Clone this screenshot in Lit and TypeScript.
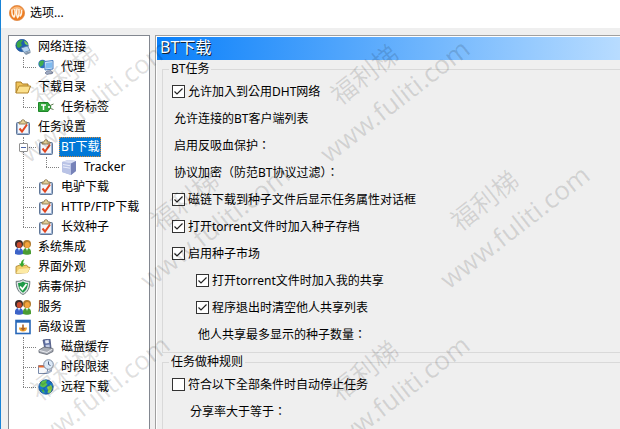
import { LitElement, html, css, svg, nothing } from "lit";
import type { SVGTemplateResult, TemplateResult } from "lit";
import { customElement, property } from "lit/decorators.js";

const person = (x: number, hair: string, face: string, coat: string) => svg`
  <g transform="translate(${x} 0)">
    <path d="M0 15c-.6-4 1-6 4-6s4.500 2 4 6c-2 1-6 1-8 0z" fill="${coat}"/>
    <path d="M3 9l1 3 1-3z" fill="#fff"/>
    <circle cx="4" cy="5" r="4" fill="${hair}"/>
    <ellipse cx="4.300" cy="6" rx="2.500" ry="3" fill="${face}"/>
  </g>`;

const people = svg`${person(0, "#3a2a28", "#c84a2c", "#3c63c8")}${person(8, "#b07a2c", "#f4a43c", "#4a9c34")}`;

const clipboard = svg`
  <rect x="1.500" y="3.500" width="13" height="12" rx="1" fill="#9fb4d4" stroke="#5f7697"/>
  <rect x="3" y="4" width="10" height="10" fill="#f4f6fb"/>
  <path d="M4 5V3h2c0-3 4-3 4 0h2v2z" fill="#e4cf98" stroke="#7d6a42" stroke-width=".8"/>
  <path d="M4.500 9.500l2.500 3 5-7" fill="none" stroke="#e2461f" stroke-width="2"/>`;

const icons: Record<string, SVGTemplateResult> = {
  logo: svg`
    <circle cx="8" cy="8" r="7.600" fill="#ee7d22" stroke="#e08a48" stroke-width=".8"/>
    <path d="M1.500 6C4 0 12 0 14.500 6c-3-2-10-2-13 0z" fill="#f9b87a"/>
    <path d="M3 4.500c-.4 4 .4 6.500 2 7.500 1.200-1.500 1.200-5 .8-8M8 3.500c-.6 4-.3 7.500.6 9 1.500-1.800 1.700-5 1.300-8.500M12.500 5c.4 3-.1 5-1.700 6.500" fill="none" stroke="#fff4e4" stroke-width="1.500"/>`,
  network: svg`
    <circle cx="7" cy="6.500" r="6.200" fill="#1f5fae" stroke="#174a8c" stroke-width=".6"/>
    <path d="M1.500 5c1-3 4-4.500 6.500-4l-2 3 1 2.500-3 2.500-2-1z" fill="#3aa646"/>
    <path d="M9 1.500c2.500 1 4 3 4 5l-3-1.500z" fill="#7fd455"/>
    <path d="M6 9l6.500-2 2.500 4.500-6 2z" fill="#b6d5f2" stroke="#54789f" stroke-width=".8"/>
    <path d="M9 14l6.500-2v2l-4.500 2z" fill="#8496ab"/>`,
  proxy: svg`
    <circle cx="4.500" cy="5" r="4.200" fill="#2f72bd"/>
    <path d="M1 4c1-3 4-3 5-2L5 6 2 8z" fill="#3fae4d"/>
    <path d="M6.500 2.500l8.500-1v8.500l-8 1z" fill="#cfe4fa" stroke="#4a7fc0"/>
    <path d="M8 4l6-.8v5.500L8 9.500z" fill="#7fbcf0"/>
    <path d="M9 12l4-.5 2 2.500-6 1.500-2-1.500z" fill="#9fabc2" stroke="#66718c" stroke-width=".7"/>`,
  folder: svg`
    <path d="M1 14V3h5l1.500 2H13v3" fill="#f0c45a" stroke="#a87a24"/>
    <path d="M1 14L4 7h11.500L13 14z" fill="#fbe08c" stroke="#b3852b"/>`,
  tag: svg`
    <path d="M.5 3.500h9.500L13 8l-3 4.500H.5z" fill="#33a83b" stroke="#1f8629"/>
    <path d="M3 6h5M5.500 6v5" stroke="#fff" stroke-width="1.500"/>
    <path d="M11 7l4.500-2M11 9l4.500 1.500" stroke="#5b7a4e"/>
    <circle cx="11" cy="8" r="1.100" fill="#fff"/>`,
  clipboard,
  server: svg`
    <path d="M1 3l6-2 8 1v10l-5 4-9-3z" fill="#a9b4dc"/>
    <path d="M1 3l6-2 8 1-5 2.500z" fill="#d7ddf3"/>
    <path d="M10 4.500L15 2v10l-5 4z" fill="#7682b8"/>
    <path d="M1 3l9 1.500V16l-9-3z" fill="#b9c3e6"/>
    <path d="M2 5.500l7 1.200M2 8l7 1.200" stroke="#e9edfa"/>`,
  people,
  look: svg`
    <path d="M1 14.500V7.500l4-1.500 2 1 4.500-1 1.500 2 2 .5-2.500 5z" fill="#f2cf6c" stroke="#b08a35" stroke-width=".9"/>
    <path d="M1 14.500l3-4.500 11-1-2.500 5z" fill="#fdeaa4"/>
    <path d="M9.500 0C6.500 1 6 3 6 4.500H4l3 3.500 2.800-3.500H8.200c0-1.500.3-3 1.300-4.500z" fill="#35a82e"/>`,
  shield: svg`
    <path d="M8 .6c2 1.400 4.500 1.900 6.800 1.700C15 9 12.500 13.500 8 15.500 3.500 13.500 1 9 1.200 2.300 3.500 2.500 6 2 8 .6z" fill="#dfe5e6" stroke="#59696b" stroke-width=".9"/>
    <path d="M8 2.500c1.500 1 3.300 1.500 5 1.500-.2 4.500-2 8-5 9.700C5 12 3.200 8.500 3 4c1.700 0 3.500-.5 5-1.500z" fill="#1f9a48"/>
    <path d="M5 7.500l2.500 2.800L11.500 5" fill="none" stroke="#fff" stroke-width="1.800"/>`,
  advanced: svg`
    <rect x="1" y="1.500" width="14" height="13" fill="#fff" stroke="#2767b8" stroke-width="1.600"/>
    <path d="M1 2.500h14" stroke="#2767b8" stroke-width="2.400"/>
    <path d="M4 8.500a4 4 0 0 0 8 0z" fill="#f1a22a"/>
    <path d="M7.200 5.500h1.600V9h1.700L8 12 5.500 9h1.700z" fill="#a8622c"/>`,
  disk: svg`
    <path d="M5 1l7-1 1 9-6 1z" fill="#5f70a4" stroke="#444f78" stroke-width=".8"/>
    <path d="M7 1.500l3.500-.5.5 3-3.500.5z" fill="#e7ecf7"/>
    <path d="M7.500 6l4-.5.300 3-3.800.5z" fill="#c2cbe4"/>
    <path d="M1 11l5-3 9 1.500v3l-6 3-8-2z" fill="#a9adb6" stroke="#5d626d" stroke-width=".8"/>
    <path d="M1.500 11.500l7.500 2 5.500-3.500" fill="none" stroke="#e9ebef"/>`,
  schedule: svg`
    <path d="M.5 6.500h9v8h-9z" fill="#f5f7fb" stroke="#7a8bab"/>
    <path d="M.5 6.500h9v2h-9z" fill="#e8682e"/>
    <circle cx="10.500" cy="5.500" r="4.800" fill="#dbe8f6" stroke="#7b8ba3"/>
    <path d="M10.500 2.500v3l2 1" fill="none" stroke="#4c5f80"/>
    <path d="M8 13l6-3v2.500L10 15z" fill="#a7b4cb"/>`,
  globe: svg`
    <circle cx="8" cy="8" r="7.200" fill="#1a78cc" stroke="#114f8f" stroke-width=".8"/>
    <path d="M3 3c2-2 5-2 6-1.500L8 4l1.500 1.500L7 8l-2 .5L2 7z" fill="#5cc14c"/>
    <path d="M9 8l4-2 1.500 3-2 4.500L9.500 14 10 11z" fill="#8cd04a"/>
    <path d="M3 10l3 1 .5 3-2-1z" fill="#46b350"/>`,
};

const icon = (name: string): TemplateResult =>
  html`<svg class="icon" viewBox="0 0 16 16" width="16" height="16" aria-hidden="true">${icons[name]}</svg>`;

interface Node {
  label: string;
  icon: string;
  selected?: boolean;
  expander?: boolean;
  children?: Node[];
}

const TREE: Node[] = [
  { label: "网络连接", icon: "network", children: [{ label: "代理", icon: "proxy" }] },
  { label: "下载目录", icon: "folder", children: [{ label: "任务标签", icon: "tag" }] },
  {
    label: "任务设置",
    icon: "clipboard",
    children: [
      {
        label: "BT下载",
        icon: "clipboard",
        selected: true,
        expander: true,
        children: [{ label: "Tracker", icon: "server" }],
      },
      { label: "电驴下载", icon: "clipboard" },
      { label: "HTTP/FTP下载", icon: "clipboard" },
      { label: "长效种子", icon: "clipboard" },
    ],
  },
  { label: "系统集成", icon: "people" },
  { label: "界面外观", icon: "look" },
  { label: "病毒保护", icon: "shield" },
  { label: "服务", icon: "people" },
  {
    label: "高级设置",
    icon: "advanced",
    children: [
      { label: "磁盘缓存", icon: "disk" },
      { label: "时段限速", icon: "schedule" },
      { label: "远程下载", icon: "globe" },
    ],
  },
];

@customElement("option-tree")
export class OptionTree extends LitElement {
  static styles = css`
    :host {
      display: block;
      background: #fff;
      border: 1px solid #828790;
      border-bottom: 0;
      box-sizing: border-box;
      padding: 1px 0 0 6px;
    }
    ul {
      list-style: none;
      margin: 0;
      padding: 0;
    }
    .branch {
      margin-left: 8px;
    }
    .branch > li {
      position: relative;
      padding-left: 15px;
    }
    .branch > li::before {
      content: "";
      position: absolute;
      left: 0;
      top: 0;
      bottom: 0;
      border-left: 1px dotted #808080;
    }
    .branch > li:last-child::before {
      bottom: auto;
      height: 10px;
    }
    .branch > li::after {
      content: "";
      position: absolute;
      left: 0;
      top: 10px;
      width: 13px;
      border-top: 1px dotted #808080;
    }
    .row {
      display: flex;
      align-items: center;
      height: 20px;
      gap: 5px;
    }
    .icon {
      flex: none;
      display: block;
    }
    .label {
      line-height: 18px;
      padding: 0 1px;
      border: 1px solid transparent;
      white-space: nowrap;
    }
    .selected {
      background: #0078d7;
      color: #fff;
      border: 1px dotted #d88a3a;
    }
    .expander {
      position: absolute;
      z-index: 1;
      left: -4px;
      top: 6px;
      width: 9px;
      height: 9px;
      padding: 0;
      border: 1px solid #919191;
      border-radius: 1px;
      background: linear-gradient(#4b63a7, #4b63a7) center / 5px 1px no-repeat #fff;
    }
  `;

  private node(n: Node): TemplateResult {
    return html`<li role="treeitem" aria-selected=${n.selected ? "true" : "false"}>
      ${n.expander ? html`<button class="expander" aria-label="折叠"></button>` : nothing}
      <div class="row">${icon(n.icon)}<span class="label ${n.selected ? "selected" : ""}">${n.label}</span></div>
      ${n.children
        ? html`<ul class="branch" role="group">${n.children.map((c) => this.node(c))}</ul>`
        : nothing}
    </li>`;
  }

  render() {
    return html`<ul role="tree">${TREE.map((n) => this.node(n))}</ul>`;
  }
}

@customElement("check-row")
export class CheckRow extends LitElement {
  @property() label = "";
  @property({ type: Boolean }) checked = false;

  static styles = css`
    :host {
      display: block;
    }
    label {
      display: flex;
      align-items: center;
      gap: 3px;
      height: 27px;
      white-space: nowrap;
    }
    input {
      appearance: none;
      flex: none;
      width: 13px;
      height: 13px;
      margin: 0;
      border: 1px solid #333;
      background: #fff;
    }
    input:checked {
      background: #fff
        url("data:image/svg+xml,%3Csvg xmlns='http://www.w3.org/2000/svg' viewBox='0 0 11 11'%3E%3Cpath d='M1.500 5.500L4 8l5.500-5.500' fill='none' stroke='%23222' stroke-width='1.200'/%3E%3C/svg%3E")
        center / 11px 11px no-repeat;
    }
  `;

  render() {
    return html`<label><input type="checkbox" .checked=${this.checked} />${this.label}</label>`;
  }
}

const MARKS = [
  [28, 164],
  [328, 164],
  [628, 164],
  [148, 290],
  [448, 290],
  [28, 460],
  [328, 460],
];

@customElement("app-root")
export class AppRoot extends LitElement {
  static styles = css`
    :host {
      display: flex;
      flex-direction: column;
      position: relative;
      box-sizing: border-box;
      height: 100vh;
      overflow: hidden;
      border-left: 1px solid #1883d7;
      background: #efefef;
      color: #000;
      font: 12px/20px "Noto Sans", "Noto Sans CJK TC", sans-serif;
    }
    .titlebar {
      flex: none;
      display: flex;
      align-items: center;
      gap: 5px;
      height: 25px;
      padding: 0 8px 3px;
      background: #fff;
    }
    .body {
      flex: 1;
      min-height: 0;
      display: flex;
      gap: 5px;
      padding: 7px 0 0 7px;
    }
    option-tree {
      flex: none;
      width: 142px;
    }
    .panel {
      flex: 1;
      min-width: 0;
      display: flex;
      flex-direction: column;
      border: solid #a0a0a0;
      border-width: 1px 0 0 1px;
      box-shadow: inset 1px 1px #fff;
      padding: 1px 0 0 1px;
    }
    .banner {
      margin: 0;
      padding-left: 3px;
      height: 23px;
      font-size: 16px;
      font-weight: 400;
      line-height: 20px;
      color: #fff;
      text-shadow: 1px 1px #123;
      background: linear-gradient(90deg, #0a80fa, #b8dcff);
    }
    fieldset {
      flex: none;
      margin: 0 0 0 5px;
      min-width: 0;
      border: 1px solid #d9d9d9;
      border-right: 0;
      padding: 0 0 4px 9px;
    }
    fieldset.rules {
      flex: 1;
      border-bottom: 0;
    }
    legend {
      margin-left: -3px;
      padding: 0 2px;
      line-height: 18px;
    }
    .line {
      height: 27px;
      line-height: 27px;
      padding-left: 2px;
      white-space: nowrap;
    }
    .sub {
      margin-left: 24px;
    }
    .inset {
      margin-left: 16px;
    }
    .marks {
      position: absolute;
      inset: 0;
      width: 100%;
      height: 100%;
      pointer-events: none;
      fill: #000;
      fill-opacity: 0.12;
      font-family: "Noto Sans", "Noto Sans CJK SC", sans-serif;
      font-size: 26px;
    }
  `;

  render() {
    return html`
      <header class="titlebar">${icon("logo")}<span>选项...</span></header>
      <main class="body">
        <option-tree></option-tree>
        <section class="panel">
          <h1 class="banner">BT下载</h1>
          <fieldset>
            <legend>BT任务</legend>
            <check-row checked label="允许加入到公用DHT网络"></check-row>
            <div class="line">允许连接的BT客户端列表</div>
            <div class="line">启用反吸血保护：</div>
            <div class="line">协议加密（防范BT协议过滤）：</div>
            <check-row checked label="磁链下载到种子文件后显示任务属性对话框"></check-row>
            <check-row checked label="打开torrent文件时加入种子存档"></check-row>
            <check-row checked label="启用种子市场"></check-row>
            <check-row class="sub" checked label="打开torrent文件时加入我的共享"></check-row>
            <check-row class="sub" checked label="程序退出时清空他人共享列表"></check-row>
            <div class="line sub">他人共享最多显示的种子数量：</div>
          </fieldset>
          <fieldset class="rules">
            <legend>任务做种规则</legend>
            <check-row label="符合以下全部条件时自动停止任务"></check-row>
            <div class="line inset">分享率大于等于：</div>
          </fieldset>
        </section>
      </main>
      <svg class="marks" aria-hidden="true">
        ${MARKS.map(
          ([x, y]) => svg`<g transform="translate(${x} ${y}) rotate(-38)">
            <text>www.fuliti.com</text>
            <text x="44" y="-39">福利梯</text>
          </g>`,
        )}
      </svg>
    `;
  }
}
